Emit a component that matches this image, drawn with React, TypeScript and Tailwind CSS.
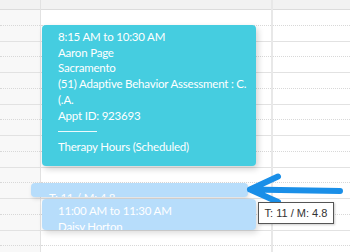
import React from "react";

const rows = Array.from({ length: 16 }, (_, i) => i);

function Column({ className = "" }: { className?: string }) {
  return (
    <div className={`flex flex-col ${className}`}>
      <div className="h-[10px] shrink-0 bg-[#f2f2f2] border-b border-[#dcdcdc]" />
      {rows.map((i) => (
        <div
          key={i}
          className={`h-[15.75px] shrink-0 border-b ${
            i % 2 === 0 ? "border-dotted border-[#d8d8d8]" : "border-solid border-[#e2e2e2]"
          }`}
        />
      ))}
    </div>
  );
}

export default function App() {
  return (
    <div
      className="relative w-[350px] h-[252px] overflow-hidden bg-white"
      style={{ fontFamily: "Lato, 'Noto Sans', sans-serif" }}
    >
      <div className="flex h-full">
        <Column className="w-[41px] bg-[#f8f8f8] border-r border-[#e2e2e2]" />
        <Column className="w-[232px] border-r-2 border-[#e8e8e8]" />
        <Column className="flex-1" />
      </div>

      {/* Main appointment card */}
      <div className="absolute left-[42px] top-[25px] w-[214px] h-[141px] rounded-[4px] bg-[#45cde0] shadow-[2px_3px_6px_rgba(0,0,0,0.18)] pl-[16px] pr-[4px] pt-[4px] text-white text-[11.5px] tracking-[-0.2px] leading-[15.7px]">
        <div>8:15 AM to 10:30 AM</div>
        <div>Aaron Page</div>
        <div>Sacramento</div>
        <div className="whitespace-nowrap">(51) Adaptive Behavior Assessment : C.</div>
        <div>(.A.</div>
        <div>Appt ID: 923693</div>
        <div className="h-[15.7px] flex items-center">
          <div className="w-[39px] border-t border-white/90" />
        </div>
        <div>Therapy Hours (Scheduled)</div>
      </div>

      {/* Dragged bar */}
      <div className="absolute left-[31px] top-[183px] w-[217px] h-[14px] rounded-[4px] bg-[#b7ddfb] overflow-hidden shadow-[1px_2px_4px_rgba(0,0,0,0.12)] pl-[18px] text-white text-[11.5px] tracking-[-0.2px] leading-[15.7px]">
        <div className="pt-[6.5px]">T: 11 / M: 4.8</div>
      </div>

      {/* Second appointment card */}
      <div className="absolute left-[42px] top-[199px] w-[214px] h-[31px] rounded-[4px] bg-[#b7ddfb] overflow-hidden shadow-[2px_3px_6px_rgba(0,0,0,0.15)] pl-[16px] pt-[4px] text-white text-[11.5px] tracking-[-0.2px] leading-[15.7px]">
        <div>11:00 AM to 11:30 AM</div>
        <div>Daisy Horton</div>
      </div>

      {/* Arrow */}
      <svg className="absolute left-0 top-0" width="350" height="252" viewBox="0 0 350 252">
        <path
          d="M340 191 L250 189.5 M278 176.5 L250 189.5 L278 202"
          fill="none"
          stroke="#1a8fe8"
          strokeWidth="6"
          strokeLinecap="round"
          strokeLinejoin="round"
        />
      </svg>

      {/* Tooltip */}
      <div
        className="absolute left-[258px] top-[202px] w-[76px] h-[22px] bg-white border border-[#555] flex items-center justify-center text-[11px] text-[#333] shadow-[1px_1px_2px_rgba(0,0,0,0.2)]"
        style={{ fontFamily: "'Liberation Sans', Arial, sans-serif" }}
      >
        T: 11 / M: 4.8
      </div>
    </div>
  );
}
